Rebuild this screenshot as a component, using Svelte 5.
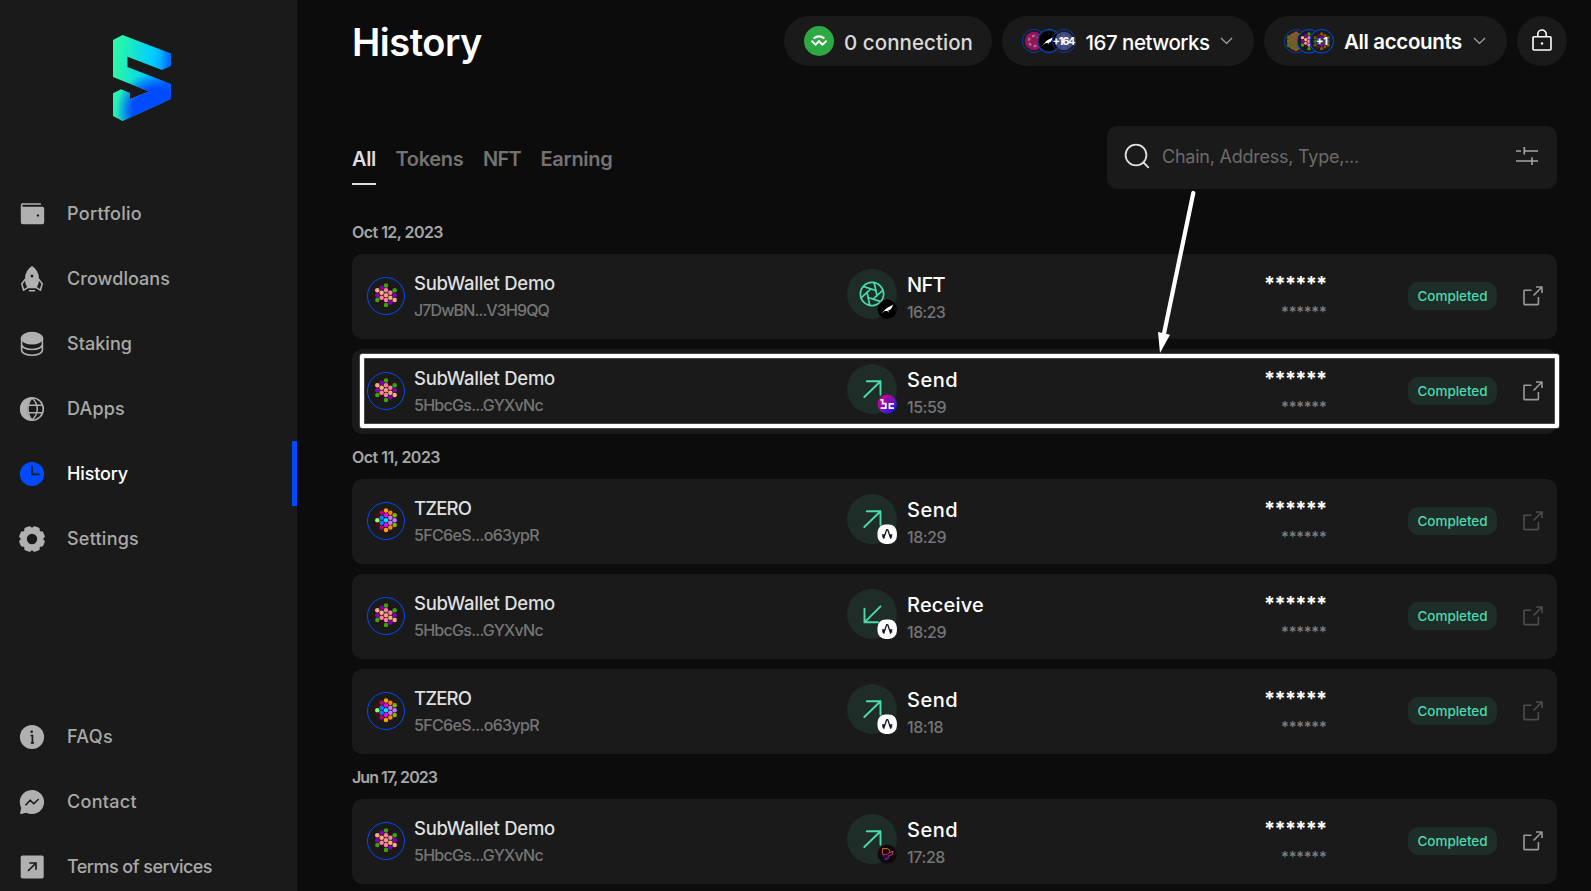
<script>
  const nav = [
    { icon: 'wallet', label: 'Portfolio', w: 75 },
    { icon: 'rocket', label: 'Crowdloans', w: 103 },
    { icon: 'database', label: 'Staking', w: 65 },
    { icon: 'globe', label: 'DApps', w: 58 },
    { icon: 'clock', label: 'History', w: 61 },
    { icon: 'gear', label: 'Settings', w: 72 }
  ];
  const current = 'clock';
  const links = [
    { icon: 'info', label: 'FAQs', w: 46 },
    { icon: 'chat', label: 'Contact', w: 70 },
    { icon: 'link', label: 'Terms of services', w: 145 }
  ];
  const tabs = [
    { label: 'All', w: 24, active: true },
    { label: 'Tokens', w: 68 },
    { label: 'NFT', w: 38 },
    { label: 'Earning', w: 72 }
  ];
  const demo = { name: 'SubWallet Demo', nw: 141, address: '5HbcGs...GYXvNc', aw: 129, avatar: 'demo' };
  const tzero = { name: 'TZERO', nw: 57, address: '5FC6eS...o63ypR', aw: 125, avatar: 'tzero' };
  const groups = [
    {
      date: 'Oct 12, 2023', w: 91,
      rows: [
        { ...demo, address: 'J7DwBN...V3H9QQ', aw: 135, type: 'NFT', tw: 38, time: '16:23', mw: 38, badge: 'bird', open: true },
        { ...demo, type: 'Send', tw: 51, time: '15:59', mw: 39, badge: 'bc', open: true }
      ]
    },
    {
      date: 'Oct 11, 2023', w: 88,
      rows: [
        { ...tzero, type: 'Send', tw: 51, time: '18:29', mw: 39, badge: 'azero' },
        { ...demo, type: 'Receive', tw: 77, time: '18:29', mw: 39, badge: 'azero' },
        { ...tzero, type: 'Send', tw: 51, time: '18:18', mw: 36, badge: 'azero' }
      ]
    },
    {
      date: 'Jun 17, 2023', w: 85,
      rows: [{ ...demo, type: 'Send', tw: 51, time: '17:28', mw: 38, badge: 'pink', open: true }]
    }
  ];

  const K = '#ff7f9f', P = '#ffac7d', V = '#8400b4', G = '#36a800', D = '#35052f';
  const palettes = {
    demo: [[P, V, G], [V, P, K, D], [G, K, '#ff9a80', K, G], [D, K, P, V], [G, V, P]],
    tzero: [
      ['#451008', '#9cf577', '#451008'], ['#b4007c', '#0a7cff', '#0a7cff', '#b4007c'],
      ['#ffa200', '#e400ff', '#00dfff', '#e400ff', '#ffa200'], ['#ff8500', '#d070ff', '#d070ff', '#ff8500'],
      ['#85b400', '#bd78ff', '#85b400']
    ],
    brown: [
      ['#3f7c25', '#8d592c', '#3f7c25'], ['#8d592c', '#8d592c', '#3f7c25', '#8d592c'],
      ['#8d592c', '#8d592c', '#8d592c', '#3f7c25', '#8d592c'], ['#8d592c', '#3f7c25', '#8d592c', '#8d592c'],
      ['#3f7c25', '#8d592c', '#3f7c25']
    ],
    mixed: [
      ['#7a4b1b', '#3c6b2c', '#7a4b1b'], ['#5c1054', '#24609c', '#24609c', '#5c1054'],
      ['#8d5a12', '#7c1390', '#0f8595', '#7c1390', '#8d5a12'], ['#8d4f12', '#6c4292', '#6c4292', '#8d4f12'],
      ['#536f16', '#614281', '#536f16']
    ]
  };
  function dots(name) {
    return palettes[name].flatMap((col, i) =>
      col.map((fill, j) => ({ fill, x: (i - 2) * 4.35, y: (j - (col.length - 1) / 2) * 4.9 }))
    );
  }

  // Tracks a label so that it fills the given advance width.
  function fit(node, width) {
    const n = node.textContent.length;
    node.style.letterSpacing = '0px';
    const natural = node.getBoundingClientRect().width;
    node.style.letterSpacing = (width - natural) / n + 'px';
  }
</script>

{#snippet hex(name)}
  {#each dots(name) as d}<circle cx={d.x} cy={d.y} r="2.25" fill={d.fill} />{/each}
{/snippet}

{#snippet bird()}
  <path d="M-6 4.5 L-2.5 .8 C-1 -1 1.4-2.2 3.5-3.2 L6-4.7 L5.2-2.6 C4.6-.4 2.8 1 1 1.4 L1.8 3.6 L.1 1.7 L-2.5 1.9 Z" fill="#fff" />
{/snippet}

{#snippet caret()}
  <svg class="caret" width="13" height="8" viewBox="0 0 13 8"><path d="M1 1l5.5 5.5L12 1" fill="none" stroke="#a6a6a6" stroke-width="1.2" /></svg>
{/snippet}

{#snippet navItem(item)}
  <a class="item" class:active={item.icon === current} href="#{item.icon}">
    <svg width="26" height="26" viewBox="0 0 26 26">
      {#if item.icon === 'wallet'}
        <path d="M3.6 3H21.4" fill="none" stroke="currentColor" stroke-width="1.5" stroke-linecap="round" />
        <path fill-rule="evenodd" d="M1.8 4.6Q1.8 2.3 4 2.3V3.8Q3.2 4 3.2 4.7Q3.3 5.8 4.4 5.8H23.3A1.9 1.9 0 0 1 25.2 7.7V21.2A2 2 0 0 1 23.2 23.2H3.8A2 2 0 0 1 1.8 21.2ZM18.9 13.3a1.2 1.2 0 1 0 .01 0Z" />
      {:else if item.icon === 'rocket'}
        <path fill-rule="evenodd" d="M13 0Q6 4.3 6 13Q6 19 9 22.2H17Q20 19 20 13Q20 4.3 13 0ZM13 8.6a1.4 1.4 0 1 1-.01 0Z" />
        <path d="M6.3 13.3L2.8 17.7L4.6 24.2L9 21.4M19.7 13.3L23.2 17.7L21.4 24.2L17 21.4M10.5 24.8H15.5" fill="none" stroke="currentColor" stroke-width="1.6" stroke-linejoin="round" stroke-linecap="round" />
      {:else if item.icon === 'database'}
        <ellipse cx="13" cy="7.2" rx="11.2" ry="6.4" />
        <path d="M2.6 7.2V18.8C2.6 22.1 7 24.3 13 24.3S23.4 22.1 23.4 18.8V7.2M2.6 13C2.6 16.3 7 18.5 13 18.5S23.4 16.3 23.4 13" fill="none" stroke="currentColor" stroke-width="1.6" />
      {:else if item.icon === 'globe'}
        <circle cx="13" cy="13" r="11.3" fill="none" stroke="currentColor" stroke-width="1.6" />
        <path d="M13 1.5C7 7 7 19 13 24.5C-3 24.5-3 1.5 13 1.5Z" />
        <path d="M13 2C7.7 8 7.7 18 13 24C20 18 20 8 13 2M8.5 9.2H24M8.5 16.8H24" fill="none" stroke="currentColor" stroke-width="1.5" />
      {:else if item.icon === 'clock'}
        <circle cx="13" cy="13" r="12.1" /><path d="M13 5.6V13.3H20" fill="none" stroke="#1a1a1a" stroke-width="1.7" stroke-linecap="round" />
      {:else if item.icon === 'gear'}
        <circle cx="13" cy="13" r="8.3" fill="none" stroke="currentColor" stroke-width="6.2" />
        {#each [0, 1, 2, 3, 4, 5, 6, 7] as k}
          <rect x="9.3" y="0" width="7.4" height="7" rx="2.2" transform="rotate({k * 45 + 22.5} 13 13)" />
        {/each}
      {:else if item.icon === 'info'}
        <circle cx="13" cy="13" r="12.1" /><circle cx="12.7" cy="7.8" r="1.3" fill="#1a1a1a" /><path d="M11.6 11.5H13.4V18.8M11.8 18.8H15" fill="none" stroke="#1a1a1a" stroke-width="1.7" />
      {:else if item.icon === 'chat'}
        <path d="M13 .9A12.1 12.1 0 1 1 7.3 23.7L2.4 25Q.8 25.2 1.2 23.5L2.2 18.7A12.1 12.1 0 0 1 13 .9Z" /><path d="M7 15.8L11.2 11.2L14.8 14.8L19.2 10.5" fill="none" stroke="#1a1a1a" stroke-width="1.6" stroke-linecap="round" stroke-linejoin="round" />
      {:else}
        <rect x="1.7" y="1.5" width="23" height="23" rx="1.8" /><path d="M9 17L17 9M10.3 9H17V15.7" fill="none" stroke="#1a1a1a" stroke-width="1.7" />
      {/if}
    </svg>
    <span class="label" use:fit={item.w}>{item.label}</span>
  </a>
{/snippet}

<div class="app">
  <aside>
    <svg class="logo" width="60" height="88" viewBox="112 34 60 88">
      <defs>
        <linearGradient id="lg-top" gradientUnits="userSpaceOnUse" x1="113" y1="60" x2="171" y2="66">
          <stop offset="0" stop-color="#2cf9a7" /><stop offset=".2" stop-color="#20edba" /><stop offset=".66" stop-color="#00cfff" /><stop offset=".8" stop-color="#00b4ff" /><stop offset=".95" stop-color="#006cff" />
        </linearGradient>
        <radialGradient id="lg-bottom" gradientUnits="userSpaceOnUse" cx="155" cy="111" r="39">
          <stop offset="0" stop-color="#004bff" /><stop offset=".58" stop-color="#004bff" /><stop offset="1" stop-color="#004bff" stop-opacity="0" />
        </radialGradient>
      </defs>
      {#each ['lg-top', 'lg-bottom'] as g}
        <path fill="url(#{g})" d="M113 40L122.5 35L171 53.5V66L162 70L127.5 56.7V67L171 84V99L122.5 121L113 116V93.3L121 89.3L130 93V99L149 91.5L113 77Z" />
      {/each}
    </svg>
    <nav>{#each nav as item}{@render navItem(item)}{/each}</nav>
    <nav class="foot">{#each links as item}{@render navItem(item)}{/each}</nav>
  </aside>

  <main>
    <header>
      <h1><span use:fit={130}>History</span></h1>
      <div class="pill conn">
        <svg width="30" height="30" viewBox="0 0 30 30"><circle cx="15" cy="15" r="15" fill="#2ea843" /><path d="M9.6 12.5Q15 8.3 20.4 12.5M7.5 14.8L11.5 18.7L15 15.2L18.5 18.7L22.5 14.8" fill="none" stroke="#fff" stroke-width="2" /></svg>
        <span class="light" use:fit={129}>0 connection</span>
      </div>
      <div class="pill nets">
        <svg width="54" height="26" viewBox="1022 28 54 26">
          <g opacity=".65"><circle cx="1034" cy="41" r="9.2" fill="#d2127f" /><circle cx="1034" cy="41" r="5.2" fill="none" stroke="#eaa9cb" stroke-width="2.3" stroke-dasharray="2.9 2.54" /></g>
          <circle cx="1034" cy="41" r="11.6" fill="none" stroke="#103aa4" />
          <circle cx="1049" cy="41" r="11.6" fill="#1a1a1a" stroke="#004bff" /><circle cx="1049" cy="41" r="10" />
          <g transform="translate(1047.5 41.5) scale(.9)">{@render bird()}</g>
          <circle cx="1064" cy="41" r="9.3" fill="#3e4b82" /><circle cx="1064" cy="41" r="11.6" fill="none" stroke="#103aa4" />
          <path d="M1064 33.5V48.5M1057 41H1071M1059 36L1069 46M1069 36L1059 46" stroke="#56628f" />
          <text x="1064" y="45" text-anchor="middle" textLength="23" font-size="11">+164</text>
        </svg>
        <span use:fit={124}>167 networks</span>{@render caret()}
      </div>
      <div class="pill accs">
        <svg width="50" height="26" viewBox="1284 28 50 26">
          <circle cx="1296" cy="41.3" r="9" fill="#754925" /><g transform="translate(1296 41.3) scale(.83)">{@render hex('brown')}</g><circle cx="1296" cy="41.3" r="11.6" fill="none" stroke="#103aa4" />
          <circle cx="1309" cy="41.3" r="11.8" fill="#1a1a1a" stroke="#004bff" /><g transform="translate(1309 41.3) scale(.75)">{@render hex('demo')}</g>
          <circle cx="1321.7" cy="41.3" r="11.8" fill="#1a1a1a" stroke="#004bff" /><g transform="translate(1321.7 41.3) scale(.75)">{@render hex('mixed')}</g>
          <text x="1322" y="45.2" text-anchor="middle" font-size="11">+1</text>
        </svg>
        <span class="strong" use:fit={118}>All accounts</span>{@render caret()}
      </div>
      <button class="pill lock" aria-label="Lock">
        <svg width="22" height="24" viewBox="0 0 22 24" fill="none" stroke="#fff" stroke-width="1.6"><rect x="2" y="8.8" width="18" height="13.2" rx="1" /><path d="M6.8 8.8V6.2A4.2 4.2 0 0 1 15.2 6.2V8.8" /><circle cx="11" cy="15.5" r="1.2" fill="#fff" stroke="none" /></svg>
      </button>
    </header>

    <div class="tools">
      <div class="tabs">
        {#each tabs as t}<button class:active={t.active}><span use:fit={t.w}>{t.label}</span></button>{/each}
      </div>
      <div class="search">
        <svg width="28" height="28" viewBox="0 0 28 28" fill="none" stroke="#e0e0e0" stroke-width="1.8" stroke-linecap="round"><circle cx="13" cy="13" r="10.4" /><path d="M20.5 20.5L25.3 25.3" /></svg>
        <span use:fit={197}>Chain, Address, Type,...</span>
        <svg class="filter" width="24" height="20" viewBox="0 0 24 20" fill="none" stroke="#a6a6a6" stroke-width="1.6"><path d="M1 5H6M9.3 5H23M9.3 1V8.6M1 15H17M17 15H23M17 11.3V19" /></svg>
      </div>
    </div>

    {#each groups as g}
      <h2><span use:fit={g.w}>{g.date}</span></h2>
      <div class="rows">
        {#each g.rows as r}
          <div class="row">
            <svg class="avatar" width="38" height="38" viewBox="-19 -19 38 38"><circle r="18.5" fill="none" stroke="#004bff" /><g transform="translate(0 -.8)">{@render hex(r.avatar)}</g></svg>
            <div class="who"><span class="name" use:fit={r.nw}>{r.name}</span><span class="addr" use:fit={r.aw}>{r.address}</span></div>
            <svg class="kind" width="50" height="50" viewBox="0 0 50 50">
              <circle cx="25" cy="25" r="25" fill="#1f2d29" />
              <g fill="none" stroke="#4cd9ac" stroke-width="1.9" stroke-linecap="round" stroke-linejoin="round">
                {#if r.type === 'NFT'}
                  <g transform="translate(25 25)" stroke-width="1.7"><circle r="11.6" />{#each [0, 1, 2, 3, 4, 5] as k}<path d="M-2.6 -4.5H10.7" transform="rotate({k * 60 + 18}) scale(-1 1)" />{/each}</g>
                {:else if r.type === 'Send'}
                  <path d="M17.3 33L33.5 17.3M19.8 17.3H33.5V30.7" />
                {:else}
                  <path d="M33.5 17.3L17.5 33.3M17.5 19.8V33.3H31" />
                {/if}
              </g>
              <g transform="translate(40.2 40.2)">
                {#if r.badge === 'bird'}
                  <circle r="9.6" />{@render bird()}
                {:else if r.badge === 'bc'}
                  <linearGradient id="bc" x1="0" y1="0" x2="1" y2="1"><stop offset=".2" stop-color="#c4009a" /><stop offset=".55" stop-color="#7313bb" /><stop offset=".85" stop-color="#1818ef" /></linearGradient>
                  <circle r="9.6" fill="url(#bc)" /><path d="M-6.8 -4.3H-4.6V-.6H-1.4V3.9H-6.6M6.8 -.4H2.3V3.9H6.8" fill="none" stroke="#fff" stroke-width="1.8" />
                {:else if r.badge === 'azero'}
                  <rect x="-9.7" y="-9.7" width="19.4" height="19.4" rx="8" fill="#fff" /><path d="M-3.6 4.6L-.6 -4.5H.6L3.6 4.6M-5.2 .6H-2.2M5.2 .6H2.2M-4.6 3.2L-3.6 .6M4.6 3.2L3.6 .6" fill="none" stroke="#111827" stroke-width="1.3" stroke-linejoin="round" />
                {:else}
                  <linearGradient id="pk" gradientUnits="userSpaceOnUse" x1="0" y1="-6" x2="0" y2="6"><stop offset="0" stop-color="#e57a18" /><stop offset=".5" stop-color="#d02467" /><stop offset="1" stop-color="#6619cf" /></linearGradient>
                  <circle r="9.6" fill="#0d0b10" /><path d="M-4.8 .5V-5.5H.5Q3 -4.5 2.5 -2L-.5 .5L-3.5 0V2.5M2.6 -1.8L5.8 -2.8L5 .8L1.5 1.4V4L-1.2 6L-2.6 4.6L1 3.2" fill="none" stroke="url(#pk)" stroke-width="1" />
                {/if}
              </g>
            </svg>
            <div class="what"><span class="type" use:fit={r.tw}>{r.type}</span><span class="time" use:fit={r.mw}>{r.time}</span></div>
            <div class="amount"><span class="big" use:fit={62.4}>******</span><span class="small" use:fit={45.4}>******</span></div>
            <span class="status"><span use:fit={70}>Completed</span></span>
            <svg class="ext" class:open={r.open} width="22" height="22" viewBox="0 0 22 22" fill="none" stroke="currentColor" stroke-width="1.6" stroke-linejoin="round"><path d="M14 2H20V8M20 2L11.5 10.5M9.5 5.2H2.5Q2 5.2 2 5.8V19Q2 19.6 2.6 19.6H15.8Q16.4 19.6 16.4 19V12" /></svg>
          </div>
        {/each}
      </div>
    {/each}
  </main>

  <div class="marker"></div>
  <svg class="pointer" width="50" height="170" viewBox="1150 188 50 170"><path d="M1193.3 193L1163.5 336" stroke="#fff" stroke-width="4.2" stroke-linecap="round" /><path d="M1160 353L1158 332L1170 334.7Z" fill="#fff" /></svg>
</div>

<style>
  :global(body) { background: #0c0c0c; overflow: hidden; }
  .app { position: relative; display: flex; width: 1591px; height: 891px; overflow: hidden; background: #0c0c0c; color: #fff; font-family: Inter, "Liberation Sans", sans-serif; font-weight: 500; }
  .app * { box-sizing: border-box; }
  span { display: inline-block; white-space: nowrap; }
  svg { display: block; flex: none; }
  button { border: 0; padding: 0; background: none; color: inherit; font: inherit; }

  aside { flex: none; width: 297px; height: 891px; background: #1a1a1a; display: flex; flex-direction: column; }
  .logo { margin: 34px 0 0 112px; }
  nav { margin-top: 59px; }
  nav.foot { margin-top: 133px; }
  .item { display: flex; align-items: center; gap: 22px; height: 65px; padding-left: 19px; font-size: 18px; color: #a9a9a9; text-decoration: none; }
  .item svg { fill: #b0b0b0; color: #b0b0b0; }
  .item.active { color: #fff; border-right: 5px solid #004bff; }
  .item.active svg { fill: #004bff; }

  main { flex: 1; padding-left: 55px; }
  header { display: flex; align-items: center; gap: 10px; padding: 16px 24px 0 0; height: 66px; }
  h1 { flex: 1; margin: 0; padding-top: 2px; font-size: 38px; font-weight: 600; line-height: 48px; }
  .pill { height: 50px; border-radius: 25px; background: #1a1a1a; display: flex; align-items: center; padding-left: 20px; font-size: 20.5px; }
  .conn { width: 208px; gap: 10px; }
  .conn span, .nets span { padding-top: 2px; }
  .light { color: #d9d9d9; }
  .nets { width: 252px; gap: 9.5px; }
  .accs { width: 243px; gap: 10px; }
  .strong { font-weight: 600; }
  .pill text { fill: #fff; font-weight: 700; }
  .caret { margin-left: 1px; }
  .lock { width: 50px; padding: 0; justify-content: center; }
  .lock svg { margin-top: -2px; }

  .tools { display: flex; justify-content: space-between; margin-top: 60px; padding-right: 34px; height: 63px; }
  .tabs { display: flex; gap: 19.5px; padding-top: 16px; height: 59px; }
  .tabs button { font-size: 20px; font-weight: 600; color: #737373; line-height: 34px; height: 43px; display: flex; }
  .tabs .active { color: #dedede; border-bottom: 2px solid #dedede; }
  .search { display: flex; align-items: center; width: 450px; height: 63px; border-radius: 10px; background: #1a1a1a; padding: 0 18px 3px 16px; font-size: 18px; font-weight: 400; color: #6b6b6b; }
  .search span { margin-left: 11px; }
  .filter { margin-left: auto; }

  h2 { margin: 0; height: 45px; font-size: 16px; font-weight: 600; line-height: 46px; color: #a6a6a6; }
  .tools + h2 { margin-top: 20px; }
  .rows { display: flex; flex-direction: column; gap: 10px; padding-right: 34px; }
  .row { display: flex; align-items: center; height: 85px; border-radius: 10px; background: #1a1a1a; padding-left: 15px; }
  .avatar { margin-bottom: 2px; }
  .who, .what, .amount { display: flex; flex-direction: column; align-items: flex-start; line-height: 27px; }
  .who { width: 433px; margin-left: 9px; padding-top: 1px; }
  .name { font-size: 18.5px; color: #dfdfdf; }
  .addr, .time { font-size: 16px; color: #757575; }
  .kind { margin-bottom: 5px; }
  .what { width: 240px; margin-left: 10px; padding-top: 4px; }
  .type { font-size: 20px; }
  .amount { width: 179.5px; align-items: flex-end; padding-top: 2px; }
  .big { font-size: 20px; font-weight: 700; }
  .small { font-size: 15px; color: #808080; }
  .status { margin: 0 0 2px 81.5px; width: 89px; height: 28px; border-radius: 10px; background: #1f2d29; color: #4cd9ac; font-size: 13.5px; line-height: 28px; text-align: center; }
  .ext { margin: 0 0 1px 24.5px; color: #4d4d4d; }
  .ext.open { color: #999; }

  .marker { position: absolute; left: 360px; top: 354px; width: 1198.5px; height: 73.5px; border: 4px solid #fff; border-radius: 2px; box-shadow: 0 0 0 .5px #777, inset 0 0 0 .5px #777; }
  .pointer { position: absolute; left: 1150px; top: 188px; }
</style>
